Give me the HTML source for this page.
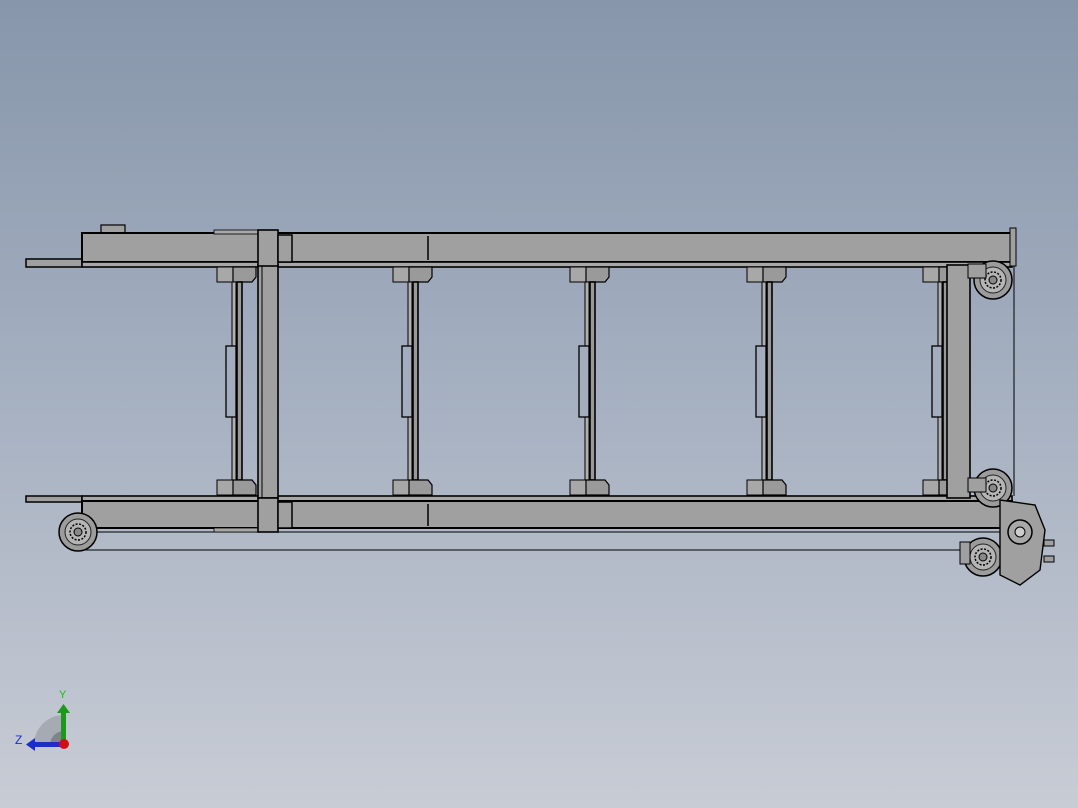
<!DOCTYPE html>
<html><head><meta charset="utf-8"><style>
html,body{margin:0;padding:0;}
body{width:1078px;height:808px;overflow:hidden;background:linear-gradient(#8796ab 0%,#a3aebf 45%,#c8ccd5 100%);}
svg{position:absolute;left:0;top:0;}
</style></head><body>
<svg width="1078" height="808" viewBox="0 0 1078 808">
<defs>
<g id="cross">
  <rect x="-17" y="267" width="16" height="15" fill="#a8a8a8" stroke="#000" stroke-width="1"/>
  <path d="M-1 267 H22 V277 L18 282 H-1 Z" fill="#9a9a9a" stroke="#000" stroke-width="1.2"/>
  <rect x="-2" y="282" width="4" height="198" fill="#b0b0b0" stroke="#000" stroke-width="1"/>
  <rect x="3" y="282" width="5" height="198" fill="#999" stroke="#000" stroke-width="1.6"/>
  <rect x="-8" y="346" width="10" height="71" fill="#a3adbd" stroke="#000" stroke-width="1.3"/>
  <rect x="-17" y="480" width="16" height="15" fill="#a8a8a8" stroke="#000" stroke-width="1"/>
  <path d="M-1 480 H18 L22 485 V495 H-1 Z" fill="#9a9a9a" stroke="#000" stroke-width="1.2"/>
</g>
<g id="wheel">
  <circle r="19" fill="#9c9c9c" stroke="#000" stroke-width="1.5"/>
  <circle r="13" fill="#b5b5b5" stroke="#222" stroke-width="1"/>
  <circle r="8" fill="none" stroke="#000" stroke-width="1.5" stroke-dasharray="2 1.5"/>
  <circle r="4" fill="#888" stroke="#000" stroke-width="1"/>
</g>
</defs>
<rect x="26" y="259" width="56" height="8" fill="#a0a0a0" stroke="#000" stroke-width="1.5"/>
<rect x="101" y="225" width="24" height="9" fill="#a0a0a0" stroke="#000" stroke-width="1.2"/>
<rect x="82" y="233" width="930" height="29" fill="#a0a0a0" stroke="#000" stroke-width="2"/>
<rect x="82" y="262" width="930" height="5" fill="#a8a8a8" stroke="#000" stroke-width="1.6"/>
<rect x="214" y="230" width="46" height="4" fill="#a8a8a8" stroke="#000" stroke-width="0.8"/>
<line x1="428" y1="236" x2="428" y2="260" stroke="#000" stroke-width="1.5"/>
<rect x="26" y="496" width="56" height="6" fill="#a0a0a0" stroke="#000" stroke-width="1.5"/>
<rect x="82" y="496" width="930" height="5" fill="#a8a8a8" stroke="#000" stroke-width="1.6"/>
<rect x="82" y="501" width="930" height="27" fill="#a0a0a0" stroke="#000" stroke-width="2"/>
<line x1="82" y1="532" x2="1000" y2="532" stroke="#000" stroke-width="1"/>
<line x1="82" y1="550" x2="1000" y2="550" stroke="#000" stroke-width="1"/>
<rect x="214" y="528" width="46" height="4" fill="#a8a8a8" stroke="#000" stroke-width="0.8"/>
<line x1="428" y1="504" x2="428" y2="526" stroke="#000" stroke-width="1.5"/>
<rect x="258" y="265" width="20" height="233" fill="#a0a0a0" stroke="#000" stroke-width="1.6"/>
<line x1="262" y1="265" x2="262" y2="498" stroke="#000"/>
<rect x="258" y="230" width="20" height="36" fill="#a0a0a0" stroke="#000" stroke-width="1.6"/>
<rect x="258" y="498" width="20" height="34" fill="#a0a0a0" stroke="#000" stroke-width="1.6"/>
<rect x="278" y="235" width="14" height="27" fill="#a0a0a0" stroke="#000" stroke-width="1.5"/>
<rect x="278" y="502" width="14" height="26" fill="#a0a0a0" stroke="#000" stroke-width="1.5"/>
<use href="#cross" transform="translate(234,0)"/>
<use href="#cross" transform="translate(410,0)"/>
<use href="#cross" transform="translate(587,0)"/>
<use href="#cross" transform="translate(764,0)"/>
<use href="#cross" transform="translate(940,0)"/>
<rect x="947" y="265" width="23" height="233" fill="#a0a0a0" stroke="#000" stroke-width="1.6"/>
<rect x="1010" y="228" width="6" height="38" fill="#a0a0a0" stroke="#000"/>
<line x1="1014" y1="266" x2="1014" y2="496" stroke="#000" stroke-width="1"/>
<use href="#wheel" transform="translate(78,532)"/>
<use href="#wheel" transform="translate(993,280)"/>
<use href="#wheel" transform="translate(993,488)"/>
<use href="#wheel" transform="translate(983,557)"/>
<rect x="968" y="264" width="18" height="14" fill="#a0a0a0" stroke="#000"/>
<rect x="968" y="478" width="18" height="14" fill="#a0a0a0" stroke="#000"/>
<path d="M1000 500 L1035 505 L1045 530 L1040 570 L1020 585 L1000 575 Z" fill="#a0a0a0" stroke="#000" stroke-width="1.4"/>
<circle cx="1020" cy="532" r="12" fill="#a8a8a8" stroke="#000" stroke-width="1.5"/>
<circle cx="1020" cy="532" r="5" fill="#ccc" stroke="#000"/>
<rect x="1044" y="540" width="10" height="6" fill="#a0a0a0" stroke="#000"/>
<rect x="1044" y="556" width="10" height="6" fill="#a0a0a0" stroke="#000"/>
<rect x="960" y="542" width="10" height="22" fill="#a0a0a0" stroke="#000"/>
<path d="M34 745 A30 30 0 0 1 64 715 V745 Z" fill="#a6aab2"/>
<path d="M50 745 A14 14 0 0 1 64 731 V745 Z" fill="#7f838a"/>
<rect x="61" y="712" width="5" height="33" fill="#1a9a1a"/>
<path d="M57 713 L63.5 704 L70 713 Z" fill="#1a9a1a"/>
<rect x="33" y="742" width="30" height="5" fill="#1a2fc8"/>
<path d="M35 738 L26 744.5 L35 751 Z" fill="#1a2fc8"/>
<circle cx="64" cy="744" r="5" fill="#d01010"/>
<text x="59" y="698" font-family="Liberation Sans,sans-serif" font-size="11" fill="#10c010">Y</text>
<text x="15" y="744" font-family="Liberation Sans,sans-serif" font-size="12" fill="#1a2fc8">Z</text>
</svg>
</body></html>
